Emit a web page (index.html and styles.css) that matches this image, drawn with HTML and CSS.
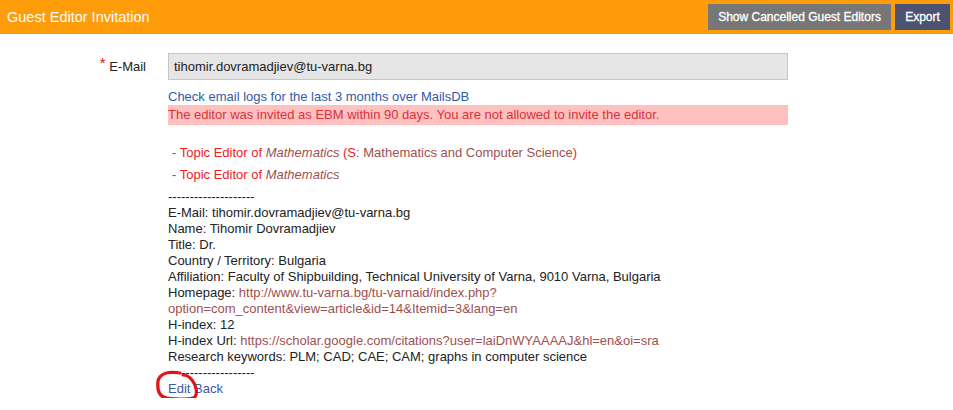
FILE: index.html
```html
<!DOCTYPE html>
<html>
<head>
<meta charset="utf-8">
<link rel="stylesheet" href="styles.css">
</head>
<body>
<header class="topbar">
  <div class="title">Guest Editor Invitation</div>
  <div class="actions">
    <button class="btn btn-gray">Show Cancelled Guest Editors</button>
    <button class="btn btn-navy">Export</button>
  </div>
</header>
<main class="form">
  <div class="row">
    <label class="label"><span class="req">*</span> E-Mail</label>
    <div class="field">
      <div class="input">tihomir.dovramadjiev@tu-varna.bg</div>
      <a class="link logs" href="#">Check email logs for the last 3 months over MailsDB</a>
      <div class="alert">The editor was invited as EBM within 90 days. You are not allowed to invite the editor.</div>
      <ul class="roles">
        <li><span class="red">- Topic Editor of </span><a class="brown" href="#"><em>Mathematics</em></a><span class="red"> (S</span><span class="brown">: Mathematics and Computer Science</span><span class="red">)</span></li>
        <li><span class="red">- Topic Editor of </span><a class="brown" href="#"><em>Mathematics</em></a></li>
      </ul>
      <div class="info">
        <div>--------------------</div>
        <div>E-Mail: tihomir.dovramadjiev@tu-varna.bg</div>
        <div>Name: Tihomir Dovramadjiev</div>
        <div>Title: Dr.</div>
        <div>Country / Territory: Bulgaria</div>
        <div>Affiliation: Faculty of Shipbuilding, Technical University of Varna, 9010 Varna, Bulgaria</div>
        <div>Homepage: <a class="brown" href="#">http://www.tu-varna.bg/tu-varnaid/index.php?<br>option=com_content&amp;view=article&amp;id=14&amp;Itemid=3&amp;lang=en</a></div>
        <div>H-index: 12</div>
        <div>H-index Url: <a class="brown" href="#">https://scholar.google.com/citations?user=laiDnWYAAAAJ&amp;hl=en&amp;oi=sra</a></div>
        <div>Research keywords: PLM; CAD; CAE; CAM; graphs in computer science</div>
        <div>--------------------</div>
      </div>
      <div class="links">
        <a class="link" href="#">Edit</a> <a class="link" href="#">Back</a>
        <svg class="scribble" width="46" height="32" viewBox="0 0 46 32"><path d="M24 3 C13 1 4 3 2 11 C1 20 3 27 11 28 C21 29 35 30 39 27 C42 23 40 15 36 10 C33 6 30 5 27 5" fill="none" stroke="#e0141b" stroke-width="3.2" stroke-linecap="round"/></svg>
      </div>
    </div>
  </div>
</main>
</body>
</html>
```
FILE: styles.css
```css
* { box-sizing: border-box; }
body {
  margin: 0;
  font-family: "Liberation Sans", Arial, sans-serif;
  font-size: 13px;
  color: #222;
  background: #fff;
}
.topbar {
  display: flex;
  align-items: center;
  justify-content: space-between;
  height: 34px;
  background: #ff9c0a;
  padding: 0 3px 0 7px;
}
.title {
  color: #fff;
  font-size: 14.5px;
}
.actions {
  display: flex;
  gap: 4px;
  align-self: flex-start;
  padding-top: 4px;
}
.btn {
  border: 0;
  height: 26px;
  color: #fff;
  font-family: "Liberation Sans", Arial, sans-serif;
  font-size: 12px;
  font-weight: normal;
  white-space: nowrap;
  padding: 0;
  cursor: pointer;
  -webkit-text-stroke: 0.3px #fff;
}
.btn-gray { background: #777777; width: 183px; }
.btn-navy { background: #4b5272; width: 55px; }
.form { padding-top: 19px; }
.row {
  display: grid;
  grid-template-columns: 168px 620px;
}
.label {
  text-align: right;
  padding-right: 22px;
  font-size: 13px;
  line-height: 27px;
  color: #222;
}
.req {
  color: #e0141b;
  font-size: 15px;
  vertical-align: top;
  line-height: 20px;
}
.input {
  height: 27px;
  background: #e6e6e6;
  border: 1px solid #c6c6c6;
  padding: 0 5px;
  font-size: 13px;
  line-height: 25px;
  color: #222;
}
.link {
  color: #3559a6;
  text-decoration: none;
}
.logs {
  display: block;
  margin-top: 8px;
  line-height: 17px;
}
.alert {
  background: #ffc0c0;
  color: #d8323c;
  line-height: 20px;
  height: 20px;
}
.roles {
  list-style: none;
  margin: 17px 0 0;
  padding: 0 0 0 4px;
}
.roles li {
  line-height: 22px;
}
.red { color: #ee2222; }
.brown { color: #a0504d; text-decoration: none; }
.info {
  margin-top: 3px;
  line-height: 16px;
  color: #222;
}
.links {
  position: relative;
  line-height: 18px;
  margin-top: -1px;
}
.scribble {
  position: absolute;
  left: -12px;
  top: -10px;
}
```
